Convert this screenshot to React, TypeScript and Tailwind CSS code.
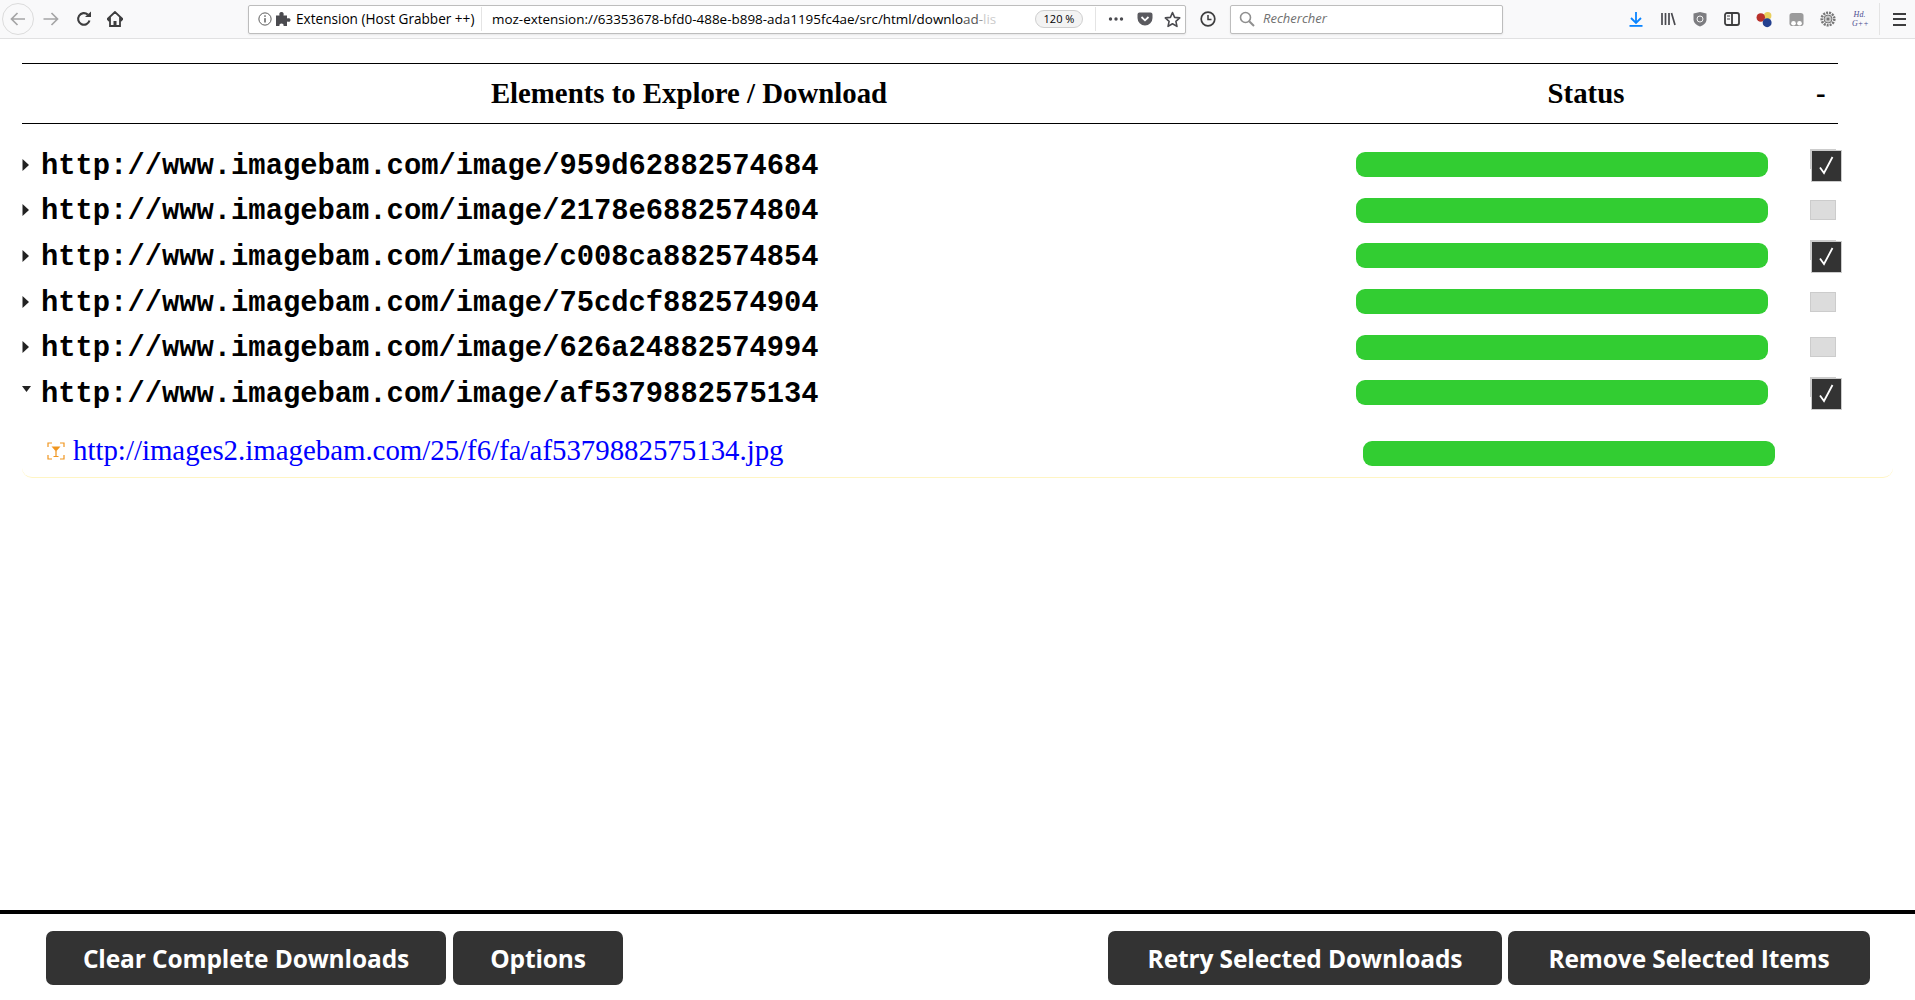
import React from "react";

const ui = "font-['Open_Sans','Liberation_Sans',sans-serif]";

const rows = [
  { url: "http://www.imagebam.com/image/959d62882574684", checked: true },
  { url: "http://www.imagebam.com/image/2178e6882574804", checked: false },
  { url: "http://www.imagebam.com/image/c008ca882574854", checked: true },
  { url: "http://www.imagebam.com/image/75cdcf882574904", checked: false },
  { url: "http://www.imagebam.com/image/626a24882574994", checked: false },
  { url: "http://www.imagebam.com/image/af5379882575134", checked: true, open: true },
];

function Ico({ w, ml, children }: { w: number; ml: number; children: React.ReactNode }) {
  return (
    <svg width={w} height={w} viewBox="0 0 16 16" style={{ marginLeft: ml }} className="shrink-0" fill="none">
      {children}
    </svg>
  );
}

function Toolbar() {
  return (
    <div className={`${ui} h-[39px] shrink-0 bg-[#f9f9fa] border-b border-[#e1e1e2] flex items-center text-black`}>
      <div className="ml-[2px] w-[32px] h-[32px] rounded-full border border-[#dcdcdc] flex items-center justify-center shrink-0">
        <svg width="16" height="16" viewBox="0 0 16 16" fill="none" stroke="#a5a5a6" strokeWidth="1.7">
          <path d="M1.5 8H15M7.5 2 1.5 8l6 6" />
        </svg>
      </div>
      <Ico w={16} ml={9}>
        <path d="M0.5 8H14.5M8.5 2l6 6-6 6" stroke="#a5a5a6" strokeWidth="1.7" />
      </Ico>
      <Ico w={16} ml={17}>
        <path d="M13.5 9.5A5.8 5.8 0 1 1 11.8 3.6" stroke="#3d3d3e" strokeWidth="2.1" />
        <path d="M9 6h6V0.5z" fill="#3d3d3e" />
      </Ico>
      <Ico w={16} ml={15}>
        <path d="M8 1 0.5 8l1.2 1.2L3 8v7h10V8l1.3 1.2L15.5 8z" fill="none" stroke="#3d3d3e" strokeWidth="1.8" />
        <rect x="6.5" y="10" width="3" height="5" fill="#3d3d3e" />
      </Ico>

      <div className="ml-[125px] w-[938px] h-[29px] bg-white border border-[#bdbdbd] rounded-[2px] flex items-center shrink-0 shadow-[0_1px_2px_rgba(0,0,0,0.08)]">
        <Ico w={14} ml={9}>
          <circle cx="8" cy="8" r="7" stroke="#555" strokeWidth="1.1" />
          <rect x="7.2" y="7" width="1.6" height="5" fill="#555" />
          <rect x="7.2" y="3.8" width="1.6" height="1.7" fill="#555" />
        </Ico>
        <Ico w={16} ml={3}>
          <path d="M1 4.5h3.5C4 2.5 4.500 1 6.500 1S9 2.500 8.500 4.500H12V7.500C13.500 7 15.500 7 15.500 9S13.500 11 12 10.500V15H8.500C9 13.500 8 12.500 6.500 12.500S4 13.500 4.500 15H1z" fill="#4a4a4f" />
        </Ico>
        <span className="ml-[5px] text-[13.6px] whitespace-nowrap w-[185px]">Extension (Host Grabber ++)</span>
        <div className="w-px h-[24px] bg-[#e4e4e4]" />
        <span className="ml-[10px] text-[13.45px] whitespace-nowrap w-[507px] overflow-hidden">
          moz-extension://63353678-bfd0-488e-b898-ada1195fc4ae/src/html/downlo
          <span className="text-[#555]">ad</span>
          <span className="text-[#999]">-</span>
          <span className="text-[#ccc]">lis</span>
        </span>
        <span className="ml-[36px] w-[48px] h-[18px] rounded-full border border-[#cfcfcf] bg-[#f3f3f3] text-[11px] flex items-center justify-center shrink-0">
          120 %
        </span>
        <div className="ml-[12px] w-px h-[24px] bg-[#e4e4e4]" />
        <Ico w={16} ml={12}>
          <circle cx="2.500" cy="8" r="1.700" fill="#4a4a4f" />
          <circle cx="8" cy="8" r="1.700" fill="#4a4a4f" />
          <circle cx="13.500" cy="8" r="1.700" fill="#4a4a4f" />
        </Ico>
        <Ico w={16} ml={13}>
          <path d="M0.500 3.500A2 2 0 0 1 2.500 1.500h11a2 2 0 0 1 2 2V7a7.500 7.500 0 0 1-15 0z" fill="#5a5a5f" />
          <path d="M4.500 6 8 9.300 11.500 6" stroke="#fff" strokeWidth="1.800" />
        </Ico>
        <Ico w={17} ml={11}>
          <path d="M8 1.500 10 6l4.800.5-3.600 3.200 1 4.800L8 12l-4.200 2.500 1-4.800L1.200 6.500 6 6z" stroke="#4a4a4f" strokeWidth="1.500" strokeLinejoin="round" />
        </Ico>
      </div>

      <Ico w={16} ml={14}>
        <circle cx="8" cy="8" r="6.800" stroke="#3d3d3e" strokeWidth="1.700" />
        <path d="M8 4v4.500h3.500" stroke="#3d3d3e" strokeWidth="1.500" />
      </Ico>

      <div className="ml-[14px] w-[273px] h-[29px] bg-white border border-[#bdbdbd] rounded-[2px] flex items-center shrink-0 shadow-[0_1px_2px_rgba(0,0,0,0.08)]">
        <Ico w={16} ml={8}>
          <circle cx="6.500" cy="6.500" r="5" stroke="#8f8f8f" strokeWidth="1.600" />
          <path d="M10.200 10.200 15 15" stroke="#8f8f8f" strokeWidth="2" />
        </Ico>
        <span className="ml-[8px] text-[13px] italic text-[#707070]">Rechercher</span>
      </div>

      <Ico w={16} ml={125}>
        <path d="M8 1v10M3 7l5 5 5-5" stroke="#0a84ff" strokeWidth="1.800" />
        <rect x="1.500" y="14" width="13" height="1.800" fill="#0a84ff" />
      </Ico>
      <Ico w={16} ml={16}>
        <path d="M2 2v12M5.500 2v12M9 2v12M11.500 2l3.500 12" stroke="#4a4a4f" strokeWidth="1.700" />
      </Ico>
      <Ico w={16} ml={16}>
        <path d="M1.500 2.500 8 1l6.500 1.500v6C14.500 12 11 14.500 8 15.500 5 14.500 1.500 12 1.500 8.500z" fill="#7d7d80" />
        <circle cx="8" cy="8" r="3" stroke="#f2f2f2" strokeWidth="1" />
      </Ico>
      <Ico w={16} ml={16}>
        <rect x="1" y="2" width="14" height="12" rx="2" stroke="#3d3d3e" strokeWidth="1.800" />
        <path d="M8 2v12" stroke="#3d3d3e" strokeWidth="1.800" />
        <path d="M3 5h3M3 8h3" stroke="#3d3d3e" strokeWidth="1" />
      </Ico>
      <Ico w={17} ml={16}>
        <circle cx="11" cy="4.500" r="3.500" fill="#e9cf5c" />
        <circle cx="4.500" cy="6" r="4" fill="#b8302a" />
        <circle cx="10.500" cy="11" r="4.200" fill="#24408f" />
      </Ico>
      <Ico w={15} ml={16}>
        <rect x="0.500" y="1" width="15" height="14" rx="3" fill="#9b9b9b" />
        <circle cx="4.800" cy="12" r="2.500" fill="#fff" />
        <circle cx="11.200" cy="12" r="2.500" fill="#fff" />
      </Ico>
      <Ico w={16} ml={16}>
        <circle cx="8" cy="8" r="6.300" fill="none" stroke="#777" strokeWidth="2.600" strokeDasharray="2 1" />
        <circle cx="8" cy="8" r="4" fill="#c9c9c9" stroke="#777" strokeWidth="1" />
        <circle cx="8" cy="8" r="1.500" fill="#777" />
      </Ico>
      <span className="ml-[16px] w-[15px] shrink-0 text-[8px] leading-[9px] italic text-[#4b4a8f] text-center font-['Liberation_Serif',serif]">
        Hd.
        <br />
        G++
      </span>
      <div className="ml-[12px] w-px h-[32px] bg-[#e4e4e4] shrink-0" />
      <div className="ml-[13px] w-[13px] h-[13px] flex flex-col justify-between shrink-0">
        <div className="h-[2px] bg-[#3d3d3e]" />
        <div className="h-[2px] bg-[#3d3d3e]" />
        <div className="h-[2px] bg-[#3d3d3e]" />
      </div>
    </div>
  );
}

function Check({ checked }: { checked: boolean }) {
  return (
    <div
      className={`relative ml-[42px] w-[26px] h-[20px] bg-[#dcdcdc] border border-[#cccccc] shrink-0 ${
        checked ? "-translate-y-[6px]" : ""
      }`}
    >
      {checked && (
        <div className="absolute left-0 top-0 w-[31px] h-[32px] bg-[#333333] border border-[#cccccc] flex items-center justify-center">
          <svg width="17" height="19" viewBox="0 0 17 19" fill="none" stroke="#fff" strokeWidth="1.800">
            <path d="M2 11.500 6 17 14.500 1" />
          </svg>
        </div>
      )}
    </div>
  );
}

function Bar() {
  return <div className="w-[412px] h-[25px] rounded-[9px] bg-[#32cd32] shrink-0" />;
}

function Button({ w, label }: { w: string; label: string }) {
  return (
    <button className={`${w} h-[54px] pt-[2px] bg-[#333333] text-white rounded-[7px] text-[24.5px] font-bold tracking-[-0.12px] flex items-center justify-center ${ui}`}>
      {label}
    </button>
  );
}

export default function App() {
  return (
    <div className="w-[1915px] h-[1000px] bg-white flex flex-col overflow-hidden">
      <Toolbar />
      <main className="flex-1 min-h-0 pl-[22px] pt-[24px] font-['Liberation_Serif',serif] text-black">
        <div className="w-[1816px] h-[61px] border-y border-black flex items-center font-bold text-[28.8px]">
          <div className="w-[1334px] text-center">Elements to Explore / Download</div>
          <div className="w-[460px] text-center">Status</div>
          <div className="flex-1 text-left">-</div>
        </div>

        <div className="pt-[18px]">
          {rows.map((r) => (
            <div key={r.url} className="h-[45.6px] flex items-center">
              <div className="w-[19px] shrink-0 flex">
                {r.open ? (
                  <svg width="9" height="6" viewBox="0 0 9 6" className="-mt-[7px]">
                    <path d="M0 0h9L4.500 6z" fill="#222" />
                  </svg>
                ) : (
                  <svg width="7" height="12" viewBox="0 0 7 12">
                    <path d="M0.500 0 7 6 0.500 12z" fill="#222" />
                  </svg>
                )}
              </div>
              <div className="w-[1315px] shrink-0 pt-[5px] font-['Liberation_Mono',monospace] font-bold text-[28.8px] leading-none">
                {r.url}
              </div>
              <Bar />
              <Check checked={!!r.checked} />
            </div>
          ))}
        </div>

        <div className="w-[1871px] h-[62px] border-b border-[#fff5c4] rounded-b-[10px] flex items-center pt-[15px]">
          <svg width="18" height="18" viewBox="0 0 18 18" fill="none" className="ml-[25px] shrink-0 mb-[6px]">
            <path d="M1 5V1h4M13 1h4v4M17 13v4h-4M5 17H1v-4" stroke="#f0951e" strokeWidth="1.200" />
            <path d="M4.500 4.500h9L9 9.500z" fill="#f0951e" />
            <path d="M9 9v5M6.500 14.500h5" stroke="#f0951e" strokeWidth="1.200" />
          </svg>
          <a className="ml-[8px] w-[1290px] shrink-0 pb-[7px] text-[28.85px] leading-none text-[#0000ff] whitespace-nowrap">
            http://images2.imagebam.com/25/f6/fa/af5379882575134.jpg
          </a>
          <Bar />
        </div>
      </main>

      <footer className="h-[90px] shrink-0 border-t-4 border-black pt-[17px] pl-[46px] pr-[45px] flex justify-between">
        <div className="flex gap-[7px]">
          <Button w="w-[400px]" label="Clear Complete Downloads" />
          <Button w="w-[170px]" label="Options" />
        </div>
        <div className="flex gap-[6px]">
          <Button w="w-[394px]" label="Retry Selected Downloads" />
          <Button w="w-[362px]" label="Remove Selected Items" />
        </div>
      </footer>
    </div>
  );
}
